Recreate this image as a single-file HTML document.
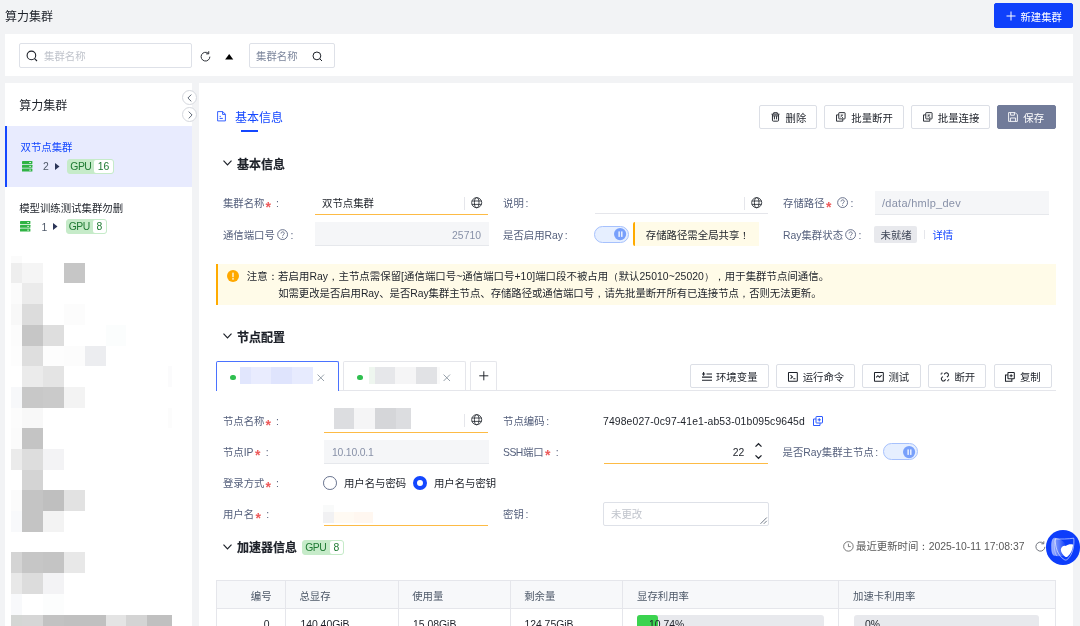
<!DOCTYPE html>
<html lang="zh-CN">
<head>
<meta charset="utf-8">
<title>算力集群</title>
<style>
*{box-sizing:border-box;margin:0;padding:0}
html,body{width:1080px;height:626px;overflow:hidden;background:#f2f3f5}
body{will-change:transform;font-family:"Liberation Sans","Noto Sans CJK SC",sans-serif;font-size:10.4px;color:#1d2129;position:relative;line-height:1}
.abs{position:absolute}
.t{position:absolute;white-space:nowrap;line-height:14px;height:14px;margin-top:1px}
.panel{position:absolute;background:#fff}
.btn{position:absolute;height:24px;border:1px solid #dcdfe6;border-radius:2px;background:#fff;color:#1d2129;font-size:10.4px;line-height:22px;white-space:nowrap}
.btn svg{position:absolute}
.btn span{position:absolute;top:2px}
.lbl{color:#56617d}
.req{color:#ee5a5a}
.gray{color:#8891a8}
.blue{color:#1447ff}
.bold{font-weight:700;-webkit-text-stroke:0.2px #1d2129}
.h12{font-size:12px;line-height:16px;height:16px;margin-top:0}
svg{display:block;overflow:visible}
.ico{position:absolute}
.inp-dis{position:absolute;background:#f5f6f8;border-bottom:1px solid #e6e8ec;height:24px}
.uline{position:absolute;height:1.7px;background:#fdbb45}
.gline{position:absolute;height:1px;background:#e5e6eb}
.vdiv{position:absolute;width:1px;background:#e5e6eb}
.tag{position:absolute;height:15px;border-radius:3px;background:#c6ebc9;border:1px solid #c6ebc9}
.tag .g{letter-spacing:-0.5px;position:absolute;left:2px;top:0;line-height:13px;color:#1f7a33;font-size:10.4px}
.tag .n{position:absolute;top:0;bottom:0;right:0;background:#fff;border-radius:2px;line-height:13px;color:#1f7a33;text-align:center;font-size:10.4px}
.mz{position:absolute}
.p{font-family:"Liberation Sans","WenQuanYi Zen Hei","Noto Sans CJK SC",sans-serif}
.req{display:inline-block;vertical-align:top;height:14px;font-size:14px;line-height:14px;position:relative;top:2.7px;font-weight:700}
</style>
</head>
<body>
<!-- page header -->
<div class="t h12" style="left:5px;top:9px;color:#1d2129">算力集群</div>
<div class="btn" style="left:994px;top:3px;width:79px;height:25px;background:#0f40fb;border-color:#0f40fb;color:#fff">
  <svg style="left:11px;top:6.5px" width="10" height="10" viewBox="0 0 10 10"><path d="M5 0.5v9M0.5 5h9" stroke="#fff" stroke-width="1" fill="none"/></svg>
  <span style="left:25.4px;top:3px">新建集群</span>
</div>

<!-- search panel -->
<div class="panel" style="left:5px;top:34.4px;width:1068px;height:41.6px"></div>
<div class="abs" style="left:19.3px;top:43px;width:172.4px;height:24.6px;border:1px solid #dee1e8;border-radius:2px;background:#fff"></div>
<svg class="ico" style="left:26px;top:50px" width="12" height="12" viewBox="0 0 12 12"><circle cx="5.4" cy="5.4" r="4.3" fill="none" stroke="#1d2129" stroke-width="1.1"/><path d="M8.6 8.6L11 11" stroke="#1d2129" stroke-width="1.1"/></svg>
<div class="t" style="left:44px;top:49.4px;color:#c0c4cc">集群名称</div>
<svg class="ico" style="left:200px;top:50.7px" width="11.2" height="11.2" viewBox="0 0 11 11"><path d="M9.7 5.6A4.3 4.3 0 1 1 8.2 2.3" fill="none" stroke="#1d2129" stroke-width="0.9"/><path d="M8.6 0.2v2.6h-2.6" fill="none" stroke="#1d2129" stroke-width="0.9"/></svg>
<svg class="ico" style="left:224.5px;top:54px" width="8.4" height="5.4" viewBox="0 0 9 6"><path d="M4.5 0L9 6H0z" fill="#000"/></svg>
<div class="abs" style="left:249.3px;top:43px;width:85.5px;height:24.6px;border:1px solid #dee1e8;border-radius:2px;background:#fff"></div>
<div class="t" style="left:256px;top:49px;color:#7c869c">集群名称</div>
<svg class="ico" style="left:312px;top:50.5px" width="11" height="11" viewBox="0 0 11 11"><circle cx="4.9" cy="4.9" r="3.9" fill="none" stroke="#1d2129" stroke-width="1"/><path d="M7.8 7.8L10 10" stroke="#1d2129" stroke-width="1"/></svg>

<!-- LEFT PANEL -->
<div class="panel" style="left:5px;top:83px;width:187px;height:543px"></div>
<div class="t h12" style="left:19.2px;top:97.5px">算力集群</div>

<div class="abs" style="left:5px;top:126px;width:187px;height:61px;background:#e8ebfe"></div>
<div class="abs" style="left:5px;top:126px;width:2px;height:61px;background:#1447ff"></div>
<div class="t blue" style="left:20.5px;top:139.8px">双节点集群</div>
<svg class="ico" style="left:21.5px;top:160.8px" width="10.4" height="10.6" viewBox="0 0 10.4 10.6"><g fill="#2fb344"><rect x="0" y="0" width="10.4" height="3" rx="0.4"/><rect x="0" y="3.8" width="10.4" height="3" rx="0.4"/><rect x="0" y="7.6" width="10.4" height="3" rx="0.4"/></g><g fill="#fff"><rect x="7.2" y="1.1" width="1.8" height="0.8"/><rect x="7.2" y="4.9" width="1.8" height="0.8"/><rect x="7.2" y="8.7" width="1.8" height="0.8"/></g></svg>
<div class="t" style="left:43px;top:159px;color:#4e5969">2</div>
<svg class="ico" style="left:55px;top:162.5px" width="4.5" height="7" viewBox="0 0 4.5 7"><path d="M0 0L4.5 3.5L0 7z" fill="#2b3558"/></svg>
<div class="tag" style="left:67.3px;top:158.6px;width:47px"><span class="g">GPU</span><span class="n" style="width:19.7px">16</span></div>
<div class="t" style="left:19.2px;top:201px;color:#1d2129">模型训练测试集群勿删</div>
<svg class="ico" style="left:20px;top:221px" width="10.4" height="10.6" viewBox="0 0 10.4 10.6"><g fill="#2fb344"><rect x="0" y="0" width="10.4" height="3" rx="0.4"/><rect x="0" y="3.8" width="10.4" height="3" rx="0.4"/><rect x="0" y="7.6" width="10.4" height="3" rx="0.4"/></g><g fill="#fff"><rect x="7.2" y="1.1" width="1.8" height="0.8"/><rect x="7.2" y="4.9" width="1.8" height="0.8"/><rect x="7.2" y="8.7" width="1.8" height="0.8"/></g></svg>
<div class="t" style="left:41.5px;top:219.5px;color:#4e5969">1</div>
<svg class="ico" style="left:53px;top:223px" width="4.5" height="7" viewBox="0 0 4.5 7"><path d="M0 0L4.5 3.5L0 7z" fill="#2b3558"/></svg>
<div class="tag" style="left:65.7px;top:218.9px;width:41.3px"><span class="g">GPU</span><span class="n" style="width:13px">8</span></div>

<!--MOSAIC-S--><div aria-hidden="true"><i class="mz" style="left:11.0px;top:256.0px;width:11.0px;height:7.0px;background:#fbfbfb"></i><i class="mz" style="left:11.0px;top:263.0px;width:11.0px;height:20.0px;background:#eeeeee"></i><i class="mz" style="left:22.0px;top:263.0px;width:21.0px;height:20.0px;background:#f5f5f5"></i><i class="mz" style="left:64.0px;top:263.0px;width:21.0px;height:20.0px;background:#c6c6c6"></i><i class="mz" style="left:11.0px;top:283.0px;width:11.0px;height:21.0px;background:#fbfbfb"></i><i class="mz" style="left:22.0px;top:283.0px;width:21.0px;height:21.0px;background:#ebebeb"></i><i class="mz" style="left:11.0px;top:304.0px;width:11.0px;height:21.0px;background:#f8f8f8"></i><i class="mz" style="left:22.0px;top:304.0px;width:21.0px;height:21.0px;background:#dcdcdc"></i><i class="mz" style="left:64.0px;top:304.0px;width:21.0px;height:21.0px;background:#fcfcfc"></i><i class="mz" style="left:11.0px;top:325.0px;width:11.0px;height:21.0px;background:#fcfcfc"></i><i class="mz" style="left:22.0px;top:325.0px;width:21.0px;height:21.0px;background:#c6c6c6"></i><i class="mz" style="left:43.0px;top:325.0px;width:21.0px;height:21.0px;background:#dedede"></i><i class="mz" style="left:106.0px;top:325.0px;width:20.0px;height:21.0px;background:#fbfdfd"></i><i class="mz" style="left:11.0px;top:346.0px;width:11.0px;height:20.0px;background:#fdfdfd"></i><i class="mz" style="left:22.0px;top:346.0px;width:21.0px;height:20.0px;background:#dedede"></i><i class="mz" style="left:43.0px;top:346.0px;width:21.0px;height:20.0px;background:#fdfdfd"></i><i class="mz" style="left:64.0px;top:346.0px;width:21.0px;height:20.0px;background:#fcfcfc"></i><i class="mz" style="left:85.0px;top:346.0px;width:21.0px;height:20.0px;background:#ecedf0"></i><i class="mz" style="left:22.0px;top:366.0px;width:21.0px;height:21.0px;background:#ebebeb"></i><i class="mz" style="left:43.0px;top:366.0px;width:21.0px;height:21.0px;background:#e4e4e4"></i><i class="mz" style="left:168.0px;top:366.0px;width:4.0px;height:21.0px;background:#fbfbfc"></i><i class="mz" style="left:11.0px;top:387.0px;width:11.0px;height:21.0px;background:#f7f8fa"></i><i class="mz" style="left:22.0px;top:387.0px;width:21.0px;height:21.0px;background:#c8c8c8"></i><i class="mz" style="left:43.0px;top:387.0px;width:21.0px;height:21.0px;background:#cacaca"></i><i class="mz" style="left:64.0px;top:387.0px;width:21.0px;height:21.0px;background:#f3f3f3"></i><i class="mz" style="left:11.0px;top:408.0px;width:11.0px;height:20.0px;background:#fcfcfc"></i><i class="mz" style="left:22.0px;top:408.0px;width:21.0px;height:20.0px;background:#f8f8f8"></i><i class="mz" style="left:168.0px;top:408.0px;width:4.0px;height:20.0px;background:#fcfcfc"></i><i class="mz" style="left:11.0px;top:428.0px;width:11.0px;height:21.0px;background:#fbfbfb"></i><i class="mz" style="left:22.0px;top:428.0px;width:21.0px;height:21.0px;background:#c4c4c4"></i><i class="mz" style="left:11.0px;top:449.0px;width:11.0px;height:21.0px;background:#ebebeb"></i><i class="mz" style="left:22.0px;top:449.0px;width:21.0px;height:21.0px;background:#dddddd"></i><i class="mz" style="left:43.0px;top:449.0px;width:21.0px;height:21.0px;background:#f3f3f5"></i><i class="mz" style="left:22.0px;top:470.0px;width:21.0px;height:20.0px;background:#d4d4d4"></i><i class="mz" style="left:11.0px;top:490.0px;width:11.0px;height:21.0px;background:#fbfbfb"></i><i class="mz" style="left:22.0px;top:490.0px;width:21.0px;height:21.0px;background:#c4c4c4"></i><i class="mz" style="left:43.0px;top:490.0px;width:21.0px;height:21.0px;background:#bfbfbf"></i><i class="mz" style="left:64.0px;top:490.0px;width:21.0px;height:21.0px;background:#e2e2e2"></i><i class="mz" style="left:11.0px;top:511.0px;width:11.0px;height:21.0px;background:#f8f9fb"></i><i class="mz" style="left:22.0px;top:511.0px;width:21.0px;height:21.0px;background:#c4c4c4"></i><i class="mz" style="left:43.0px;top:511.0px;width:21.0px;height:21.0px;background:#f3f3f3"></i><i class="mz" style="left:11.0px;top:552.0px;width:11.0px;height:21.0px;background:#d4d4d4"></i><i class="mz" style="left:22.0px;top:552.0px;width:21.0px;height:21.0px;background:#c6c6c6"></i><i class="mz" style="left:43.0px;top:552.0px;width:21.0px;height:21.0px;background:#c4c4c4"></i><i class="mz" style="left:64.0px;top:552.0px;width:21.0px;height:21.0px;background:#e8e8e8"></i><i class="mz" style="left:11.0px;top:573.0px;width:11.0px;height:21.0px;background:#e8e8e8"></i><i class="mz" style="left:22.0px;top:573.0px;width:21.0px;height:21.0px;background:#dcdcdc"></i><i class="mz" style="left:43.0px;top:573.0px;width:21.0px;height:21.0px;background:#f3f3f5"></i><i class="mz" style="left:11.0px;top:594.0px;width:11.0px;height:21.0px;background:#f8f9fb"></i><i class="mz" style="left:43.0px;top:594.0px;width:21.0px;height:21.0px;background:#fcfdfd"></i><i class="mz" style="left:11.0px;top:615.0px;width:11.0px;height:11.0px;background:#d4d6d4"></i><i class="mz" style="left:22.0px;top:615.0px;width:21.0px;height:11.0px;background:#d6d6d6"></i><i class="mz" style="left:43.0px;top:615.0px;width:21.0px;height:11.0px;background:#c2c2c2"></i><i class="mz" style="left:64.0px;top:615.0px;width:21.0px;height:11.0px;background:#c0c0c0"></i><i class="mz" style="left:85.0px;top:615.0px;width:21.0px;height:11.0px;background:#c0c0c0"></i><i class="mz" style="left:106.0px;top:615.0px;width:20.0px;height:11.0px;background:#e4e4e4"></i><i class="mz" style="left:126.0px;top:615.0px;width:21.0px;height:11.0px;background:#d4d4d4"></i><i class="mz" style="left:147.0px;top:615.0px;width:21.0px;height:11.0px;background:#c0c0c0"></i><i class="mz" style="left:168.0px;top:615.0px;width:4.0px;height:11.0px;background:#c0c0c0"></i></div><!--MOSAIC-E-->

<!-- RIGHT PANEL -->
<div class="panel" style="left:199px;top:83px;width:874px;height:543px"></div>

<div class="abs" style="left:181.6px;top:89.9px;width:15.3px;height:15.3px;border:1px solid #d5d8de;border-radius:50%;background:#fff"></div>
<svg class="ico" style="left:186.5px;top:94px" width="5" height="8" viewBox="0 0 5 8"><path d="M4.3 0.6L0.9 4L4.3 7.4" fill="none" stroke="#4e5969" stroke-width="0.9"/></svg>
<div class="abs" style="left:181.6px;top:107.1px;width:15.3px;height:15.3px;border:1px solid #d5d8de;border-radius:50%;background:#fff"></div>
<svg class="ico" style="left:187.5px;top:111px" width="5" height="8" viewBox="0 0 5 8"><path d="M0.7 0.6L4.1 4L0.7 7.4" fill="none" stroke="#4e5969" stroke-width="0.9"/></svg>


<svg class="ico" style="left:217px;top:111.2px" width="9" height="10.5" viewBox="0 0 9 10.5"><path d="M0.6 0.6h5.2l2.6 2.6v6.7h-7.8z" fill="none" stroke="#1447ff" stroke-width="0.85"/><path d="M5.6 0.8v2.6h2.6" fill="none" stroke="#1447ff" stroke-width="0.9"/><path d="M2.6 7.4h3.2" stroke="#1447ff" stroke-width="0.9"/><path d="M2.6 5.4h1.2" stroke="#1447ff" stroke-width="0.9"/></svg>
<div class="t h12 blue" style="left:235px;top:109.8px">基本信息</div>
<div class="abs" style="left:241px;top:130.4px;width:17px;height:1.9px;background:#1447ff"></div>

<div class="btn" style="left:758.5px;top:104.5px;width:58.5px">
  <svg style="left:11px;top:6.4px" width="9" height="9.9" viewBox="0 0 10 11"><g fill="none" stroke="#1d2129" stroke-width="1.05"><path d="M0.6 2.4h8.8M3 2.2v-1.4h4v1.4M1.6 2.6v6.6a1 1 0 0 0 1 1h4.8a1 1 0 0 0 1-1v-6.6M3.8 4.6v3.6M6.2 4.6v3.6M2 4.3h6"/></g></svg>
  <span style="left:26px">删除</span>
</div>
<div class="btn" style="left:824.3px;top:104.5px;width:79.3px">
  <svg style="left:11.2px;top:6.4px" width="9.6" height="9.8" viewBox="0 0 11 11"><g fill="none" stroke="#1d2129" stroke-width="1.05"><rect x="3.2" y="0.6" width="7.2" height="7.2" rx="0.6"/><path d="M3 3.2h-2.4v7.2h7.2v-2.4"/><path d="M5.2 5.6l3-2.8M5.4 3.4h1.4M7 6.2h1"/></g></svg>
  <span style="left:26px">批量断开</span>
</div>
<div class="btn" style="left:910.8px;top:104.5px;width:79.3px">
  <svg style="left:11.2px;top:6.4px" width="9.6" height="9.8" viewBox="0 0 11 11"><g fill="none" stroke="#1d2129" stroke-width="1.05"><rect x="3.2" y="0.6" width="7.2" height="7.2" rx="0.6"/><path d="M3 3.2h-2.4v7.2h7.2v-2.4"/><path d="M5.2 5.4l3-2.6M5.2 3.4l1.6 0M6.8 5.8h1.6"/></g></svg>
  <span style="left:26px">批量连接</span>
</div>
<div class="btn" style="left:997px;top:104.5px;width:58.7px;background:#717b99;border-color:#717b99;color:#fff">
  <svg style="left:10.3px;top:6px" width="10" height="10" viewBox="0 0 10 10"><g fill="none" stroke="#fff" stroke-width="0.9"><path d="M0.6 0.6h6.6l2.2 2.2v6.6h-8.8z"/><path d="M2.6 0.8v2.4h3.8v-2.4M2.4 9.2v-3.2h5.2v3.2"/></g></svg>
  <span style="left:25.3px">保存</span>
</div>

<svg class="ico" style="left:223.3px;top:159.9px" width="9" height="6" viewBox="0 0 9 6"><path d="M0.5 0.7L4.5 4.9L8.5 0.7" fill="none" stroke="#1d2129" stroke-width="1.15"/></svg>
<div class="t h12 bold" style="left:237px;top:156.6px">基本信息</div>


<div class="t lbl" style="left:222.9px;top:196px">集群名称<span class="req" style="margin-left:1px">*</span><span style="margin-left:5.2px">:</span></div>
<div class="t" style="left:322px;top:196px">双节点集群</div>
<div class="vdiv" style="left:464px;top:196.5px;height:13px"></div>
<svg class="ico" style="left:470.5px;top:197.3px" width="11.4" height="11.4" viewBox="0 0 12 12"><g fill="none" stroke="#1d2129" stroke-width="0.85"><circle cx="6" cy="6" r="5.3"/><ellipse cx="6" cy="6" rx="2.4" ry="5.3"/><path d="M0.9 4.2h10.2M0.9 7.8h10.2"/></g></svg>
<div class="uline" style="left:315px;top:213.6px;width:173.3px"></div>

<div class="t lbl" style="left:222.9px;top:228px">通信端口号</div>
<svg class="ico" style="left:276.7px;top:228.8px" width="11.2" height="11.2" viewBox="0 0 12 12"><circle cx="6" cy="6" r="5.3" fill="none" stroke="#4f5a78" stroke-width="0.9"/><path d="M4.3 4.8c0-1 .8-1.7 1.8-1.7s1.7.7 1.7 1.6c0 1.3-1.7 1.4-1.7 2.6" fill="none" stroke="#4f5a78" stroke-width="0.9"/><circle cx="6.05" cy="8.9" r="0.6" fill="#4f5a78"/></svg>
<div class="t lbl" style="left:290.5px;top:228px">:</div>
<div class="inp-dis" style="left:315px;top:222.4px;width:173.5px"></div>
<div class="t gray" style="left:420px;width:61px;text-align:right;top:228px">25710</div>

<div class="t lbl" style="left:503px;top:196px">说明<span style="margin-left:1.6px">:</span></div>
<div class="vdiv" style="left:744px;top:196.5px;height:13px"></div>
<svg class="ico" style="left:750.8px;top:197.3px" width="11.4" height="11.4" viewBox="0 0 12 12"><g fill="none" stroke="#1d2129" stroke-width="0.85"><circle cx="6" cy="6" r="5.3"/><ellipse cx="6" cy="6" rx="2.4" ry="5.3"/><path d="M0.9 4.2h10.2M0.9 7.8h10.2"/></g></svg>
<div class="gline" style="left:595.3px;top:213.2px;width:172.8px"></div>

<div class="t lbl" style="left:503px;top:228px">是否启用Ray<span style="margin-left:1.6px">:</span></div>
<div class="abs" style="left:594px;top:225.8px;width:34.6px;height:17.4px;border-radius:9px;background:#e6efff;border:1.2px solid #a6c1fd"></div>
<svg class="ico" style="left:614px;top:228px" width="12.2" height="12.2" viewBox="0 0 12.2 12.2"><circle cx="6.1" cy="6.1" r="6.1" fill="#78a0fb"/><rect x="4.5" y="3.4" width="1.25" height="5.5" fill="#fff"/><rect x="7.2" y="3.4" width="1.25" height="5.5" fill="#fff"/></svg>
<div class="abs" style="left:632.9px;top:221.8px;width:125.8px;height:24.6px;background:#fffbe8;border-left:2.1px solid #ffab00;border-radius:2px 0 0 2px"></div>
<div class="t" style="left:645.8px;top:228px">存储路径需全局共享<span class="p">！</span></div>

<div class="t lbl" style="left:783px;top:196px">存储路径<span class="req" style="margin-left:1.5px">*</span></div>
<svg class="ico" style="left:836.7px;top:196.8px" width="11.2" height="11.2" viewBox="0 0 12 12"><circle cx="6" cy="6" r="5.3" fill="none" stroke="#4f5a78" stroke-width="0.9"/><path d="M4.3 4.8c0-1 .8-1.7 1.8-1.7s1.7.7 1.7 1.6c0 1.3-1.7 1.4-1.7 2.6" fill="none" stroke="#4f5a78" stroke-width="0.9"/><circle cx="6.05" cy="8.9" r="0.6" fill="#4f5a78"/></svg>
<div class="t lbl" style="left:850.5px;top:196px">:</div>
<div class="inp-dis" style="left:874.5px;top:190.6px;width:174.2px"></div>
<div class="t gray" style="left:882px;top:195px;font-size:11px;letter-spacing:0.27px">/data/hmlp_dev</div>

<div class="t lbl" style="left:783px;top:228px">Ray集群状态</div>
<svg class="ico" style="left:844.7px;top:228.8px" width="11.2" height="11.2" viewBox="0 0 12 12"><circle cx="6" cy="6" r="5.3" fill="none" stroke="#4f5a78" stroke-width="0.9"/><path d="M4.3 4.8c0-1 .8-1.7 1.8-1.7s1.7.7 1.7 1.6c0 1.3-1.7 1.4-1.7 2.6" fill="none" stroke="#4f5a78" stroke-width="0.9"/><circle cx="6.05" cy="8.9" r="0.6" fill="#4f5a78"/></svg>
<div class="t lbl" style="left:858.5px;top:228px">:</div>
<div class="abs" style="left:874.4px;top:226.2px;width:43.1px;height:16.4px;background:#e8e9ed;border-radius:2px"></div>
<div class="t" style="left:880.6px;top:227.7px;color:#3d4556">未就绪</div>
<div class="vdiv" style="left:924px;top:230px;height:9px"></div>
<div class="t blue" style="left:932.4px;top:228px">详情</div>


<div class="abs" style="left:216px;top:263.6px;width:839.5px;height:41px;background:#fffbe8;border-left:2px solid #ffab00"></div>
<svg class="ico" style="left:227px;top:270px" width="12" height="12" viewBox="0 0 12 12"><circle cx="6" cy="6" r="6" fill="#ffa800"/><rect x="5.35" y="2.6" width="1.3" height="4.6" rx="0.5" fill="#fff"/><circle cx="6" cy="8.9" r="0.8" fill="#fff"/></svg>
<div class="t" style="left:246.8px;top:269.3px;letter-spacing:0.045px">注意<span class="p">：</span>若启用Ray<span class="p">，</span>主节点需保留[通信端口号~通信端口号+10]端口段不被占用<span class="p">（</span>默认25010~25020<span class="p">）</span><span class="p">，</span>用于集群节点间通信。</div>
<div class="t" style="left:278.2px;top:286.3px;letter-spacing:-0.05px">如需更改是否启用Ray、是否Ray集群主节点、存储路径或通信端口号<span class="p">，</span>请先批量断开所有已连接节点<span class="p">，</span>否则无法更新。</div>


<svg class="ico" style="left:223.3px;top:332.6px" width="9" height="6" viewBox="0 0 9 6"><path d="M0.5 0.7L4.5 4.9L8.5 0.7" fill="none" stroke="#1d2129" stroke-width="1.15"/></svg>
<div class="t h12 bold" style="left:237px;top:330px">节点配置</div>
<div class="gline" style="left:216px;top:390.4px;width:839.5px"></div>
<div class="abs" style="left:216.4px;top:361px;width:122.6px;height:30.4px;border:1px solid #4a72ff;border-bottom:0;border-radius:2px 2px 0 0;background:#fff"></div>
<div class="abs" style="left:230.2px;top:374.8px;width:5.6px;height:5.6px;border-radius:50%;background:#2fbf4f"></div>
<i class="mz" style="left:240.2px;top:367.3px;width:10.4px;height:16.6px;background:#e1e6fd"></i><i class="mz" style="left:250.6px;top:367.3px;width:20.8px;height:16.6px;background:#e9ecfe"></i><i class="mz" style="left:271.4px;top:367.3px;width:20.8px;height:16.6px;background:#dfe4fd"></i><i class="mz" style="left:292.2px;top:367.3px;width:20.6px;height:16.6px;background:#e7ebfe"></i>
<svg class="ico" style="left:316.7px;top:373.8px" width="7.6" height="7.6" viewBox="0 0 8 8"><path d="M0.6 0.6L7.4 7.4M7.4 0.6L0.6 7.4" stroke="#86909c" stroke-width="0.9" fill="none"/></svg>
<div class="abs" style="left:342.8px;top:361px;width:123px;height:29.4px;border:1px solid #e5e6eb;border-bottom:0;border-radius:2px 2px 0 0;background:#fff"></div>
<div class="abs" style="left:357.2px;top:374.8px;width:5.6px;height:5.6px;border-radius:50%;background:#2fbf4f"></div>
<i class="mz" style="left:369.0px;top:367.3px;width:5.6px;height:16.6px;background:#eef6ef"></i><i class="mz" style="left:374.6px;top:367.3px;width:20.8px;height:16.6px;background:#e6e7ea"></i><i class="mz" style="left:395.4px;top:367.3px;width:20.8px;height:16.6px;background:#f5f5f6"></i><i class="mz" style="left:416.2px;top:367.3px;width:20.8px;height:16.6px;background:#e1e2e5"></i><i class="mz" style="left:437.0px;top:367.3px;width:3px;height:16.6px;background:#fafafa"></i>
<svg class="ico" style="left:443.3px;top:373.8px" width="7.6" height="7.6" viewBox="0 0 8 8"><path d="M0.6 0.6L7.4 7.4M7.4 0.6L0.6 7.4" stroke="#86909c" stroke-width="0.9" fill="none"/></svg>
<div class="abs" style="left:470px;top:361px;width:26.8px;height:29.4px;border:1px solid #e5e6eb;border-bottom:0;border-radius:2px 2px 0 0;background:#fff"></div>
<svg class="ico" style="left:478.6px;top:371.3px" width="9.6" height="9.6" viewBox="0 0 10 10"><path d="M5 0.3v9.4M0.3 5h9.4" stroke="#1d2129" stroke-width="1" fill="none"/></svg>

<div class="btn" style="left:689.6px;top:364.2px;width:79px">
  <svg style="left:11.1px;top:6.7px" width="10" height="9" viewBox="0 0 10 9"><g fill="none" stroke="#1d2129" stroke-width="1.05"><path d="M0 2h3.200M1.600 0v3.800M4.500 2h5.500M0 5.100h10M0 8.200h10"/></g></svg>
  <span style="left:25.4px">环境变量</span>
</div>
<div class="btn" style="left:776.3px;top:364.2px;width:78.6px">
  <svg style="left:10.8px;top:6.4px" width="9.8" height="9.8" viewBox="0 0 10 10"><g fill="none" stroke="#1d2129" stroke-width="1.05"><rect x="0.5" y="0.5" width="9" height="9" rx="0.5"/><path d="M2.6 3.2l2 1.8l-2 1.8M5.4 7h2.2"/></g></svg>
  <span style="left:25.4px">运行命令</span>
</div>
<div class="btn" style="left:862px;top:364.2px;width:58.8px">
  <svg style="left:10.8px;top:6.4px" width="9.8" height="9.8" viewBox="0 0 10 10"><g fill="none" stroke="#1d2129" stroke-width="1.05"><rect x="0.5" y="0.5" width="9" height="9" rx="0.5"/><path d="M2.2 5.6l1.8-1.8l1.6 1.6l2.2-2.2"/></g></svg>
  <span style="left:25.4px">测试</span>
</div>
<div class="btn" style="left:928px;top:364.2px;width:58.4px">
  <svg style="left:10.8px;top:6.4px" width="9.8" height="9.8" viewBox="0 0 10 10"><g fill="none" stroke="#1d2129" stroke-width="1.05"><path d="M4.2 2.4l0.9-0.9a2 2 0 0 1 2.9 2.9l-0.9 0.9M5.8 7.6l-0.9 0.9a2 2 0 0 1-2.9-2.9l0.9-0.9M2 0.6v1.2M0.6 2h1.2M8 9.4v-1.2M9.4 8h-1.2"/></g></svg>
  <span style="left:25.4px">断开</span>
</div>
<div class="btn" style="left:993.6px;top:364.2px;width:58.4px">
  <svg style="left:10.8px;top:6.4px" width="9.8" height="9.8" viewBox="0 0 10 10"><g fill="none" stroke="#1d2129" stroke-width="1.05"><rect x="3" y="0.5" width="6.5" height="6.5" rx="0.5"/><path d="M2.8 3h-2.3v6.5h6.5v-2.3M6.25 2.2v3.2M4.65 3.8h3.2"/></g></svg>
  <span style="left:25.4px">复制</span>
</div>


<div class="t lbl" style="left:222.9px;top:414px">节点名称<span class="req" style="margin-left:1px">*</span><span style="margin-left:5.2px">:</span></div>
<i class="mz" style="left:333.6px;top:408.3px;width:20.6px;height:20.6px;background:#dcdde0"></i><i class="mz" style="left:354.2px;top:408.3px;width:20.8px;height:20.6px;background:#f5f5f6"></i><i class="mz" style="left:375.0px;top:408.3px;width:20.8px;height:20.6px;background:#d5d6d9"></i><i class="mz" style="left:395.8px;top:408.3px;width:15.2px;height:20.6px;background:#dcdde0"></i>
<div class="vdiv" style="left:464px;top:413.5px;height:13px"></div>
<svg class="ico" style="left:470.7px;top:414.3px" width="11.4" height="11.4" viewBox="0 0 12 12"><g fill="none" stroke="#1d2129" stroke-width="0.85"><circle cx="6" cy="6" r="5.3"/><ellipse cx="6" cy="6" rx="2.4" ry="5.3"/><path d="M0.9 4.2h10.2M0.9 7.8h10.2"/></g></svg>
<div class="uline" style="left:323.6px;top:431.6px;width:164.6px"></div>
<div class="t lbl" style="left:503px;top:414px">节点编码<span style="margin-left:1.6px">:</span></div>
<div class="t" style="left:603px;top:414px;letter-spacing:0.12px">7498e027-0c97-41e1-ab53-01b095c9645d</div>
<svg class="ico" style="left:812.7px;top:416.2px" width="10" height="10" viewBox="0 0 10 10"><g fill="none" stroke="#1447ff" stroke-width="0.9"><rect x="3" y="0.5" width="6.5" height="6.5" rx="0.5"/><path d="M2.8 3h-2.3v6.5h6.5v-2.3M6.25 2.2v3.2M4.65 3.8h3.2"/></g></svg>

<div class="t lbl" style="left:222.9px;top:444.5px">节点IP<span class="req" style="margin-left:1.5px">*</span><span style="margin-left:5.2px">:</span></div>
<div class="inp-dis" style="left:323.7px;top:439.6px;width:165px"></div>
<div class="t gray" style="left:332px;top:444.5px;letter-spacing:-0.2px">10.10.0.1</div>
<div class="t lbl" style="left:503px;top:444.5px"><span style="letter-spacing:-0.5px">SSH</span>端口<span class="req" style="margin-left:1.3px">*</span><span style="margin-left:5.4px">:</span></div>
<div class="uline" style="left:603.5px;top:462.6px;width:164.6px"></div>
<div class="t" style="left:700px;width:44.4px;text-align:right;top:444.5px">22</div>
<svg class="ico" style="left:754.5px;top:442.6px" width="7" height="4" viewBox="0 0 7 4"><path d="M0.5 3.6L3.5 0.7L6.5 3.6" fill="none" stroke="#1d2129" stroke-width="1.25"/></svg>
<svg class="ico" style="left:754.5px;top:455.2px" width="7" height="4" viewBox="0 0 7 4"><path d="M0.5 0.4L3.5 3.3L6.5 0.4" fill="none" stroke="#1d2129" stroke-width="1.25"/></svg>
<div class="t lbl" style="left:782.5px;top:444.5px">是否Ray集群主节点<span style="margin-left:1.6px">:</span></div>
<div class="abs" style="left:883px;top:443px;width:34.6px;height:17.4px;border-radius:9px;background:#e6efff;border:1.2px solid #a6c1fd"></div>
<svg class="ico" style="left:903px;top:445.6px" width="12.2" height="12.2" viewBox="0 0 12.2 12.2"><circle cx="6.1" cy="6.1" r="6.1" fill="#78a0fb"/><rect x="4.5" y="3.4" width="1.25" height="5.5" fill="#fff"/><rect x="7.2" y="3.4" width="1.25" height="5.5" fill="#fff"/></svg>

<div class="t lbl" style="left:222.9px;top:476px">登录方式<span class="req" style="margin-left:1px">*</span><span style="margin-left:5.2px">:</span></div>
<div class="abs" style="left:323.1px;top:476.4px;width:13.8px;height:13.8px;border-radius:50%;border:1px solid #66718d;background:#fff"></div>
<div class="t" style="left:343.9px;top:476px">用户名与密码</div>
<div class="abs" style="left:413px;top:476.4px;width:13.8px;height:13.8px;border-radius:50%;border:4.1px solid #1447ff;background:#fff"></div>
<div class="t" style="left:433.9px;top:476px">用户名与密钥</div>

<div class="t lbl" style="left:222.9px;top:507px">用户名<span class="req" style="margin-left:1.5px">*</span><span style="margin-left:5.2px">:</span></div>
<i class="mz" style="left:322.5px;top:504.8px;width:11.1px;height:7.6px;background:#f9fafa"></i><i class="mz" style="left:322.5px;top:512.2px;width:11.1px;height:10.6px;background:#f1f1f3"></i><i class="mz" style="left:333.6px;top:512.2px;width:20.8px;height:10.6px;background:#fffaf3"></i><i class="mz" style="left:354.4px;top:512.2px;width:18.8px;height:10.6px;background:#fff7f0"></i>
<div class="uline" style="left:323.6px;top:524.6px;width:164.6px"></div>
<div class="t lbl" style="left:503px;top:507px">密钥<span style="margin-left:1.6px">:</span></div>
<div class="abs" style="left:603px;top:502px;width:165.6px;height:24px;border:1px solid #dee1e8;border-radius:2px;background:#fff"></div>
<div class="t" style="left:611px;top:507px;color:#c0c4cc">未更改</div>
<svg class="ico" style="left:759.5px;top:517px" width="7" height="7" viewBox="0 0 7 7"><path d="M0.5 6.8L6.8 0.5M3.8 6.8L6.8 3.8" stroke="#4e5969" stroke-width="0.8" fill="none"/></svg>


<svg class="ico" style="left:223.3px;top:543.6px" width="9" height="6" viewBox="0 0 9 6"><path d="M0.5 0.7L4.5 4.9L8.5 0.7" fill="none" stroke="#1d2129" stroke-width="1.15"/></svg>
<div class="t h12 bold" style="left:237px;top:540.1px">加速器信息</div>
<div class="tag" style="left:302.2px;top:540.3px;width:41.8px"><span class="g">GPU</span><span class="n" style="width:13px">8</span></div>
<svg class="ico" style="left:842.8px;top:541px" width="10.8" height="10.8" viewBox="0 0 12 12"><circle cx="6" cy="6" r="5.3" fill="none" stroke="#5a5a5a" stroke-width="0.9"/><path d="M6 3v3.200h2.600" fill="none" stroke="#5a5a5a" stroke-width="0.9"/></svg>
<div class="t" style="left:856px;top:539.4px;color:#5a5a5a">最近更新时间<span class="p">：</span>2025-10-11 17:08:37</div>
<svg class="ico" style="left:1034.6px;top:541.2px" width="11" height="11" viewBox="0 0 11 11"><path d="M9.9 5.8A4.5 4.5 0 1 1 8.3 2.2" fill="none" stroke="#5a5f69" stroke-width="0.85"/><path d="M8.8 0.3v2.5h-2.500" fill="none" stroke="#5a5f69" stroke-width="0.85"/></svg>


<div class="abs" style="left:216.4px;top:580.4px;width:839.6px;height:28.4px;background:#f7f8fa;border:1px solid #e5e6eb"></div>
<div class="abs" style="left:216.4px;top:608.8px;width:839.6px;height:20px;border-left:1px solid #e5e6eb;border-right:1px solid #e5e6eb"></div>
<div class="vdiv" style="left:285.3px;top:580.4px;height:46px"></div>
<div class="vdiv" style="left:397.6px;top:580.4px;height:46px"></div>
<div class="vdiv" style="left:510px;top:580.4px;height:46px"></div>
<div class="vdiv" style="left:622.4px;top:580.4px;height:46px"></div>
<div class="vdiv" style="left:838.4px;top:580.4px;height:46px"></div>
<div class="t" style="left:250.8px;top:588.5px;color:#4e5969">编号</div>
<div class="t" style="left:299.4px;top:588.5px;color:#4e5969">总显存</div>
<div class="t" style="left:412.2px;top:588.5px;color:#4e5969">使用量</div>
<div class="t" style="left:524.2px;top:588.5px;color:#4e5969">剩余量</div>
<div class="t" style="left:637px;top:588.5px;color:#4e5969">显存利用率</div>
<div class="t" style="left:853px;top:588.5px;color:#4e5969">加速卡利用率</div>
<div class="t" style="left:240px;width:29.6px;text-align:right;top:616.6px">0</div>
<div class="t" style="left:300.4px;top:616.6px">140.40GiB</div>
<div class="t" style="left:413px;top:616.6px">15.08GiB</div>
<div class="t" style="left:524.4px;top:616.6px">124.75GiB</div>
<div class="abs" style="left:637px;top:615px;width:186.5px;height:20px;border-radius:3px;background:#e8e9ed"></div>
<div class="abs" style="left:637px;top:615px;width:21px;height:20px;border-radius:3px;background:#3bd34f"></div>
<div class="t" style="left:649px;top:616.6px">10.74%</div>
<div class="abs" style="left:853.5px;top:615px;width:185.5px;height:20px;border-radius:3px;background:#e8e9ed"></div>
<div class="t" style="left:865px;top:616.6px">0%</div>


<div class="abs" style="left:1045.7px;top:529.8px;width:34.8px;height:34.8px;border-radius:50%;background:#0d3dfb"></div>
<svg class="ico" style="left:1045.7px;top:529.8px" width="34.8" height="34.8" viewBox="0 0 34.8 34.8"><defs><linearGradient id="fg" x1="0" y1="0" x2="1" y2="0"><stop offset="0" stop-color="#fff" stop-opacity="0.62"/><stop offset="0.55" stop-color="#fff" stop-opacity="0.3"/><stop offset="1" stop-color="#fff" stop-opacity="0"/></linearGradient></defs>
<path d="M9.200 8.800C14 9.300 23 9 27.800 8.200C28.400 15 27 25 21 29.600C20.200 30.200 19.200 30.200 18.400 29.700C11.500 25.500 9.200 17 9.200 8.800z" fill="none" stroke="#fff" stroke-width="0.6" opacity="0.95"/>
<path d="M8.200 7.700c-2.600 1-2.900 4.500-2.900 8.800c0 5 .6 8.500 3.200 9.300c3.500.8 8 .4 11.500 0v-11c-2.500-4-6.500-6.800-11.800-7.100z" fill="url(#fg)"/>
<path d="M9.600 8.600c-1.200 2-1.400 5-1.300 8c.2 4 1 7.300 2.700 9.600" fill="none" stroke="#fff" stroke-width="0.5" opacity="0.75"/>
<path d="M14.800 19.500c.4-2.600 2.600-4.300 5-3.600c1.400-1.300 4-2 6.200-1.700c.9 0 1.100.7 1 1.600c-.5 4.600-2.400 8.400-5.600 10.900c-.7.500-1.500.5-2.200 0c-2.400-1.800-4.200-4.200-4.400-7.200z" fill="#fff"/>
</svg>

</body>
</html>
